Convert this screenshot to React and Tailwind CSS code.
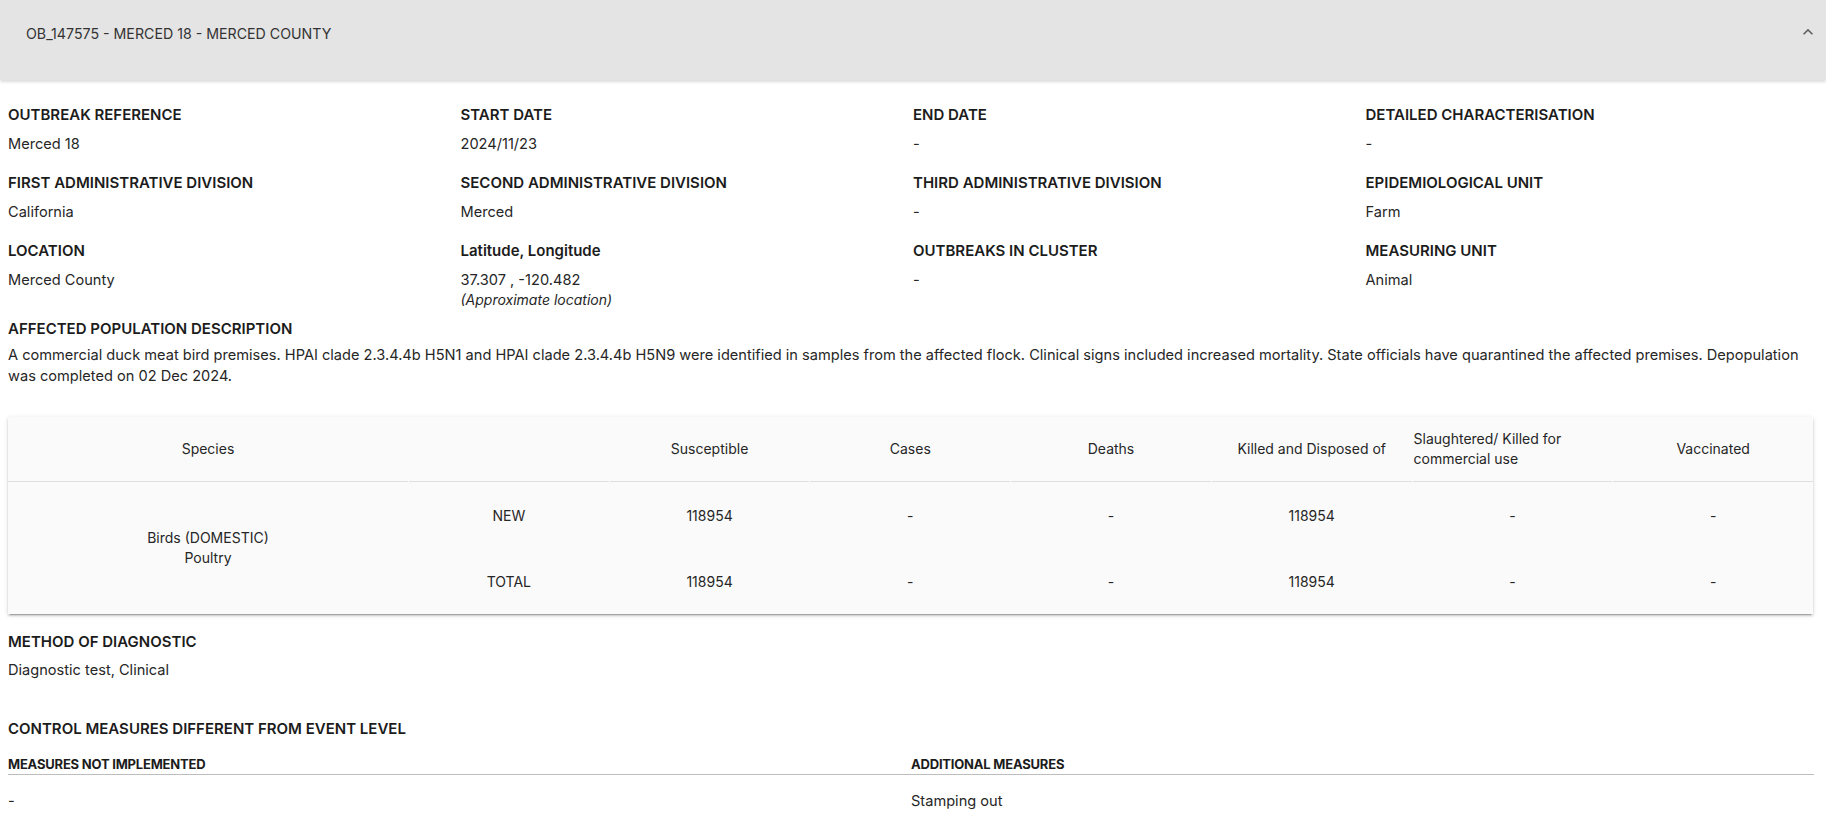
import React from "react";

function Field({ label, children }) {
  return (
    <div className="flex flex-col">
      <div className="text-[15px] font-semibold leading-[22px] text-[#1c1c1c]">{label}</div>
      <div className="mt-[8px] text-[14.6px] leading-[20px] text-[#262626]">{children}</div>
    </div>
  );
}

function ExpandLess() {
  return (
    <svg width="20" height="20" viewBox="0 0 24 24" className="mt-[-1px] shrink-0">
      <path d="M12 8l-6 6 1.41 1.41L12 10.83l4.59 4.58L18 14z" fill="#5f5f5f" />
    </svg>
  );
}

const HeadCell = ({ children, className = "" }) => (
  <div
    className={
      "h-[65px] flex items-center justify-center text-center border-b border-[#dedede] text-[14px] leading-[20px] text-[#262626] " +
      className
    }
  >
    {children}
  </div>
);

const BodyCell = ({ children, className = "" }) => (
  <div className={"h-[66px] flex items-center justify-center text-center text-[14px] text-[#262626] " + className}>
    {children}
  </div>
);

export default function App() {
  return (
    <div className="min-h-screen bg-white font-['Inter','Noto_Sans',sans-serif] text-[#212121]">
      <div className="relative z-10 h-[80px] bg-[#e4e4e4] shadow-[0_2px_3px_rgba(0,0,0,0.14)] flex items-start justify-between pt-[23px] pl-[26px] pr-[8px]">
        <span className="text-[14.2px] leading-[22px] text-[#333]">OB_147575 - MERCED 18 - MERCED COUNTY</span>
        <ExpandLess />
      </div>

      <div className="px-[8px] pt-[24px]">
        <div className="grid grid-cols-4 gap-y-[18px]">
          <Field label="OUTBREAK REFERENCE">Merced 18</Field>
          <Field label="START DATE">2024/11/23</Field>
          <Field label="END DATE">-</Field>
          <Field label="DETAILED CHARACTERISATION">-</Field>
          <Field label="FIRST ADMINISTRATIVE DIVISION">California</Field>
          <Field label="SECOND ADMINISTRATIVE DIVISION">Merced</Field>
          <Field label="THIRD ADMINISTRATIVE DIVISION">-</Field>
          <Field label="EPIDEMIOLOGICAL UNIT">Farm</Field>
          <Field label="LOCATION">Merced County</Field>
          <Field label="Latitude, Longitude">
            <div>37.307 , -120.482</div>
            <div className="italic text-[14px]">(Approximate location)</div>
          </Field>
          <Field label="OUTBREAKS IN CLUSTER">-</Field>
          <Field label="MEASURING UNIT">Animal</Field>
        </div>

        <div className="mt-[8px] text-[15px] font-semibold leading-[22px] text-[#1c1c1c]">
          AFFECTED POPULATION DESCRIPTION
        </div>
        <p className="mt-[5px] text-[14.6px] leading-[21px] text-[#262626]">
          A commercial duck meat bird premises. HPAI clade 2.3.4.4b H5N1 and HPAI clade 2.3.4.4b H5N9 were identified in
          samples from the affected flock. Clinical signs included increased mortality. State officials have quarantined
          the affected premises. Depopulation
          <br />
          was completed on 02 Dec 2024.
        </p>

        <div className="mt-[30px] mr-[5px] bg-[#fafafa] shadow-[0_3px_1px_-2px_rgba(0,0,0,0.2),0_2px_2px_0_rgba(0,0,0,0.14),0_1px_5px_0_rgba(0,0,0,0.12)]">
          <div className="grid grid-cols-[400px_repeat(7,1fr)] gap-x-px">
            <HeadCell>Species</HeadCell>
            <HeadCell>{""}</HeadCell>
            <HeadCell>Susceptible</HeadCell>
            <HeadCell>Cases</HeadCell>
            <HeadCell>Deaths</HeadCell>
            <HeadCell>Killed and Disposed of</HeadCell>
            <HeadCell className="justify-start text-left pl-px">
              <span>
                Slaughtered/ Killed for
                <br />
                commercial use
              </span>
            </HeadCell>
            <HeadCell>Vaccinated</HeadCell>

            <div className="row-span-2 flex flex-col items-center justify-center text-center text-[14px] leading-[20px] text-[#262626]">
              <span>Birds (DOMESTIC)</span>
              <span>Poultry</span>
            </div>
            <BodyCell>NEW</BodyCell>
            <BodyCell>118954</BodyCell>
            <BodyCell>-</BodyCell>
            <BodyCell>-</BodyCell>
            <BodyCell>118954</BodyCell>
            <BodyCell>-</BodyCell>
            <BodyCell>-</BodyCell>

            <BodyCell>TOTAL</BodyCell>
            <BodyCell>118954</BodyCell>
            <BodyCell>-</BodyCell>
            <BodyCell>-</BodyCell>
            <BodyCell>118954</BodyCell>
            <BodyCell>-</BodyCell>
            <BodyCell>-</BodyCell>
          </div>
        </div>

        <div className="mt-[17px] text-[15px] font-semibold leading-[22px] text-[#1c1c1c]">METHOD OF DIAGNOSTIC</div>
        <div className="mt-[7px] text-[14.6px] leading-[20px] text-[#262626]">Diagnostic test, Clinical</div>

        <div className="mt-[38px] text-[15px] font-semibold leading-[22px] text-[#1c1c1c]">
          CONTROL MEASURES DIFFERENT FROM EVENT LEVEL
        </div>

        <div className="mt-[14px] mr-[4px] grid grid-cols-2">
          <div className="border-b border-[#bdbdbd] text-[13px] font-bold leading-[20px] tracking-[-0.2px] text-[#1c1c1c]">
            MEASURES NOT IMPLEMENTED
          </div>
          <div className="border-b border-[#bdbdbd] text-[13px] font-bold leading-[20px] tracking-[-0.2px] text-[#1c1c1c]">
            ADDITIONAL MEASURES
          </div>
          <div className="mt-[16px] text-[14.6px] leading-[20px] text-[#262626]">-</div>
          <div className="mt-[16px] text-[14.6px] leading-[20px] text-[#262626]">Stamping out</div>
        </div>
      </div>
    </div>
  );
}
